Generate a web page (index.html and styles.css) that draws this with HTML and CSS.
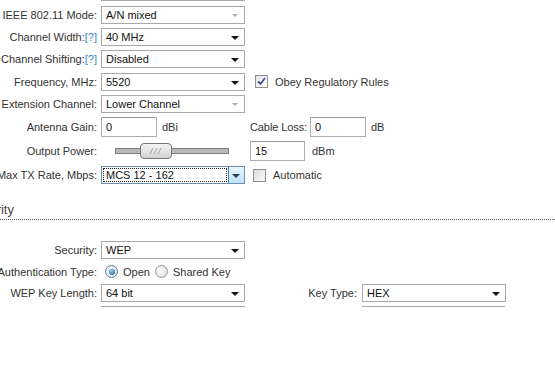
FILE: index.html
```
<!DOCTYPE html>
<html lang="en">
<head>
    <meta charset="UTF-8">
    <title>Wireless</title>
    <link rel="stylesheet" href="styles.css">
</head>
<body>
    <div class="page">
        <div class="cut-row"><span class="cut"></span></div>

        <div class="row">
            <div class="lbl">IEEE 802.11 Mode:</div>
            <div class="select disabled"><span>A/N mixed</span><i class="arrow"></i></div>
        </div>
        <div class="row">
            <div class="lbl">Channel Width:<a class="help">[?]</a></div>
            <div class="select"><span>40 MHz</span><i class="arrow"></i></div>
        </div>
        <div class="row">
            <div class="lbl">Channel Shifting:<a class="help">[?]</a></div>
            <div class="select"><span>Disabled</span><i class="arrow"></i></div>
        </div>
        <div class="row tall">
            <div class="lbl">Frequency, MHz:</div>
            <div class="select"><span>5520</span><i class="arrow"></i></div>
            <label class="check gap-left">
                <span class="box checked">
                    <svg width="9" height="9" viewBox="0 0 9 9"><path d="M1 4.5 L3.5 7 L8 1" fill="none" stroke="#3d5590" stroke-width="1.8"/></svg>
                </span>
                Obey Regulatory Rules
            </label>
        </div>
        <div class="row">
            <div class="lbl">Extension Channel:</div>
            <div class="select disabled"><span>Lower Channel</span><i class="arrow"></i></div>
        </div>
        <div class="row taller">
            <div class="lbl">Antenna Gain:</div>
            <div class="cell">
                <span class="input">0</span>
                <span class="unit">dBi</span>
            </div>
            <span class="sublbl">Cable Loss:</span>
            <span class="input">0</span>
            <span class="unit">dB</span>
        </div>
        <div class="row taller">
            <div class="lbl">Output Power:</div>
            <div class="cell">
                <div class="slider">
                    <div class="track"></div>
                    <div class="handle">
                        <svg width="14" height="6" viewBox="0 0 14 6"><path d="M1 6 L4 0 M5 6 L8 0 M9 6 L12 0" stroke="#a8a8a8" stroke-width="1" fill="none"/></svg>
                    </div>
                </div>
            </div>
            <span class="input short">15</span>
            <span class="unit wide">dBm</span>
        </div>
        <div class="row taller">
            <div class="lbl">Max TX Rate, Mbps:</div>
            <div class="select focused"><span>MCS 12 - 162</span><i class="btn"><i class="arrow"></i></i></div>
            <label class="check gap-left2">
                <span class="box"></span>
                Automatic
            </label>
        </div>

        <h3 class="section">Security</h3>

        <div class="row">
            <div class="lbl">Security:</div>
            <div class="select"><span>WEP</span><i class="arrow"></i></div>
        </div>
        <div class="row short">
            <div class="lbl">Authentication Type:</div>
            <label class="radio"><span class="dot on"></span>Open</label>
            <label class="radio"><span class="dot"></span>Shared Key</label>
        </div>
        <div class="row">
            <div class="lbl">WEP Key Length:</div>
            <div class="select"><span>64 bit</span><i class="arrow"></i></div>
            <div class="lbl2">Key Type:</div>
            <div class="select"><span>HEX</span><i class="arrow"></i></div>
        </div>
        <div class="cut-row bottom">
            <span class="cut"></span>
            <span class="cut second"></span>
        </div>
    </div>
</body>
</html>
```
FILE: styles.css
```
body {
    margin: 0;
    background: #fff;
    font-family: "Liberation Sans", Arial, sans-serif;
    font-size: 11px;
    color: #333;
}

.page {
    width: 555px;
    overflow: hidden;
}

.cut-row {
    display: flex;
    height: 4px;
    padding-left: 101px;
}

.cut {
    display: block;
    width: 144px;
    height: 1px;
    background: #aaa;
}

.cut-row.bottom {
    margin-top: 2px;
    height: 6px;
}

.cut.second {
    margin-left: 117px;
    width: 143px;
}

.row {
    display: flex;
    align-items: center;
    height: 22px;
}

.row.short {
    height: 21px;
}

.row.tall {
    height: 23px;
}

.row.taller {
    height: 24px;
}

.lbl {
    width: 97px;
    flex: none;
    display: flex;
    justify-content: flex-end;
    white-space: nowrap;
    margin-right: 4px;
}

.help {
    color: #2f8ac4;
}

.lbl2 {
    width: 112px;
    text-align: right;
    margin-right: 5px;
}

/* selects drawn by hand */
.select {
    position: relative;
    width: 142px;
    height: 16px;
    border: 1px solid #a8a8a8;
    background: #fff;
    color: #111;
    line-height: 16px;
    flex: none;
}

.select span {
    padding-left: 4px;
}

.arrow {
    position: absolute;
    right: 5px;
    top: 7px;
    width: 0;
    height: 0;
    border-left: 4px solid transparent;
    border-right: 4px solid transparent;
    border-top: 4px solid #111;
}

.select.disabled .arrow {
    border-top-color: #b0b0b0;
    border-left-width: 3px;
    border-right-width: 3px;
    border-top-width: 3px;
    right: 6px;
}

.select.focused {
    border-color: #6d8fb3;
}

.select.focused span {
    display: block;
    margin: 1px 17px 1px 1px;
    height: 12px;
    line-height: 12px;
    border: 1px dotted #222;
    padding-left: 2px;
}

.btn {
    position: absolute;
    right: 0;
    top: 0;
    width: 15px;
    height: 16px;
    border-left: 1px solid #3c7fb1;
    background: linear-gradient(#eaf6fd, #bfe4f9);
}

.btn .arrow {
    right: 4px;
    top: 7px;
    border-top-color: #1c3d5a;
}

/* checks and radios */
.check,
.radio {
    display: flex;
    align-items: center;
    color: #333;
}

.gap-left {
    margin-left: 10px;
}

.gap-left2 {
    margin-left: 8px;
}

.box {
    width: 11px;
    height: 11px;
    border: 1px solid #8f8f8f;
    background: linear-gradient(135deg, #dcdcdc, #fafafa);
    margin-right: 7px;
    display: flex;
    align-items: center;
    justify-content: center;
}

.box.checked {
    background: linear-gradient(135deg, #e6e6e6, #fff);
}

.radio {
    margin-left: 4px;
    margin-right: 1px;
}

.dot {
    width: 11px;
    height: 11px;
    border: 1px solid #9a9a9a;
    border-radius: 50%;
    background: radial-gradient(circle at 40% 40%, #fff, #d5d5d5);
    margin-right: 5px;
    display: flex;
    align-items: center;
    justify-content: center;
}

.dot.on {
    border-color: #5f7f9d;
}

.dot.on::after {
    content: "";
    width: 6px;
    height: 6px;
    border-radius: 50%;
    background: radial-gradient(circle at 40% 35%, #8fd0f2, #1a5c8c);
}

/* text inputs */
.cell {
    width: 149px;
    flex: none;
    display: flex;
    align-items: center;
}

.input {
    width: 50px;
    height: 18px;
    line-height: 18px;
    border: 1px solid #abadb3;
    border-top-color: #9a9a9a;
    padding-left: 4px;
    color: #111;
    flex: none;
}

.input.short {
    width: 49px;
}

.unit {
    margin-left: 5px;
}

.unit.wide {
    margin-left: 7px;
}

.sublbl {
    margin-right: 3px;
    letter-spacing: -0.1px;
}

/* output power slider */
.slider {
    position: relative;
    width: 114px;
    height: 16px;
    margin-left: 14px;
}

.track {
    position: absolute;
    left: 0;
    right: 0;
    top: 5px;
    height: 4px;
    border: 1px solid #7b7b7b;
    background: #b9b9b9;
}

.handle {
    position: absolute;
    left: 25px;
    top: 0;
    width: 30px;
    height: 14px;
    border: 1px solid #777;
    border-radius: 4px;
    background: linear-gradient(#f4f4f4, #d2d2d2);
    display: flex;
    align-items: center;
    justify-content: center;
}

.section {
    margin: 16px 0 0 -33px;
    height: 14px;
    padding-bottom: 2px;
    border-bottom: 1px dotted #555;
    font-size: 13px;
    font-weight: normal;
    color: #444;
    line-height: 14px;
    margin-bottom: 19px;
}
```
